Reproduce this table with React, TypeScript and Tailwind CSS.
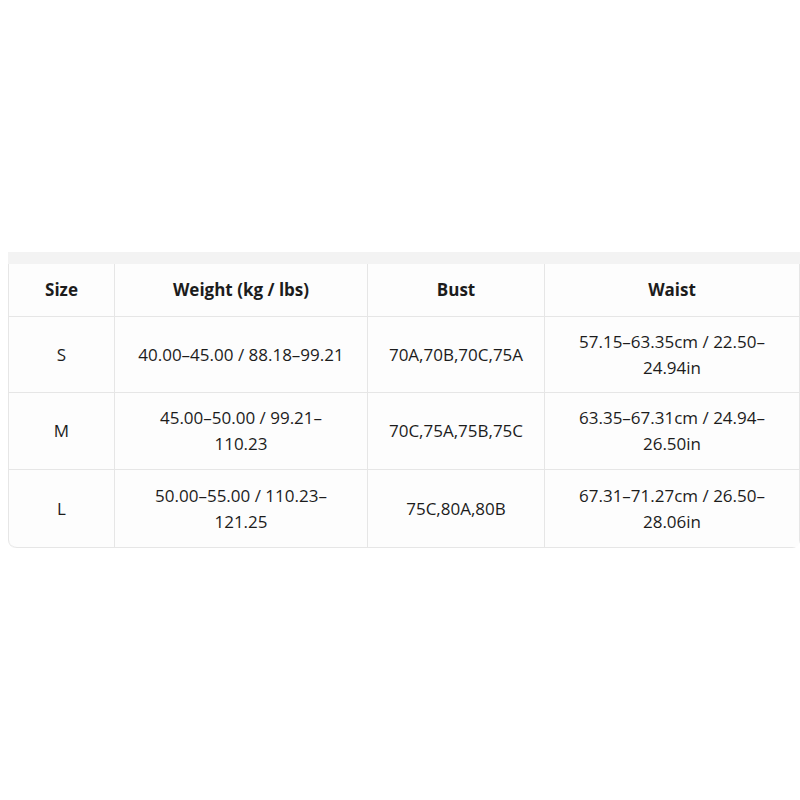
const ROWS = [
  { size: 'S', weight: '40.00–45.00 / 88.18–99.21', bust: '70A,70B,70C,75A', waist: '57.15–63.35cm / 22.50–24.94in', h: 'h-[76px]' },
  { size: 'M', weight: '45.00–50.00 / 99.21–110.23', bust: '70C,75A,75B,75C', waist: '63.35–67.31cm / 24.94–26.50in', h: 'h-[77px]' },
  { size: 'L', weight: '50.00–55.00 / 110.23–121.25', bust: '75C,80A,80B', waist: '67.31–71.27cm / 26.50–28.06in', h: 'h-[78px]' },
];

const cell = 'border-r border-b border-[#e6e6e6] px-5 text-center align-middle';

export default function App() {
  return (
    <div className="min-h-[800px] bg-white pl-2 pt-[252px] font-['Open_Sans','Noto_Sans',sans-serif] text-[#1c1c1c]">
      <div className="h-3 bg-[#f3f3f3]" />
      <table className="w-[791px] table-fixed border-separate border-spacing-0 overflow-hidden rounded-b-lg border-l border-[#e6e6e6] bg-[#fdfdfd] text-[17px] leading-[26px]">
        <colgroup>
          <col className="w-[106px]" />
          <col className="w-[253px]" />
          <col className="w-[177px]" />
          <col className="w-[255px]" />
        </colgroup>
        <thead>
          <tr className="h-[53px]">
            <th className={`${cell} font-bold`}>Size</th>
            <th className={`${cell} font-bold`}>Weight (kg / lbs)</th>
            <th className={`${cell} font-bold`}>Bust</th>
            <th className={`${cell} font-bold`}>Waist</th>
          </tr>
        </thead>
        <tbody>
          {ROWS.map((r, i) => (
            <tr key={r.size} className={r.h}>
              <td className={`${cell} ${i === 2 ? 'rounded-bl-lg' : ''}`}>{r.size}</td>
              <td className={cell}>{r.weight}</td>
              <td className={cell}>{r.bust}</td>
              <td className={cell}>{r.waist}</td>
            </tr>
          ))}
        </tbody>
      </table>
    </div>
  );
}
